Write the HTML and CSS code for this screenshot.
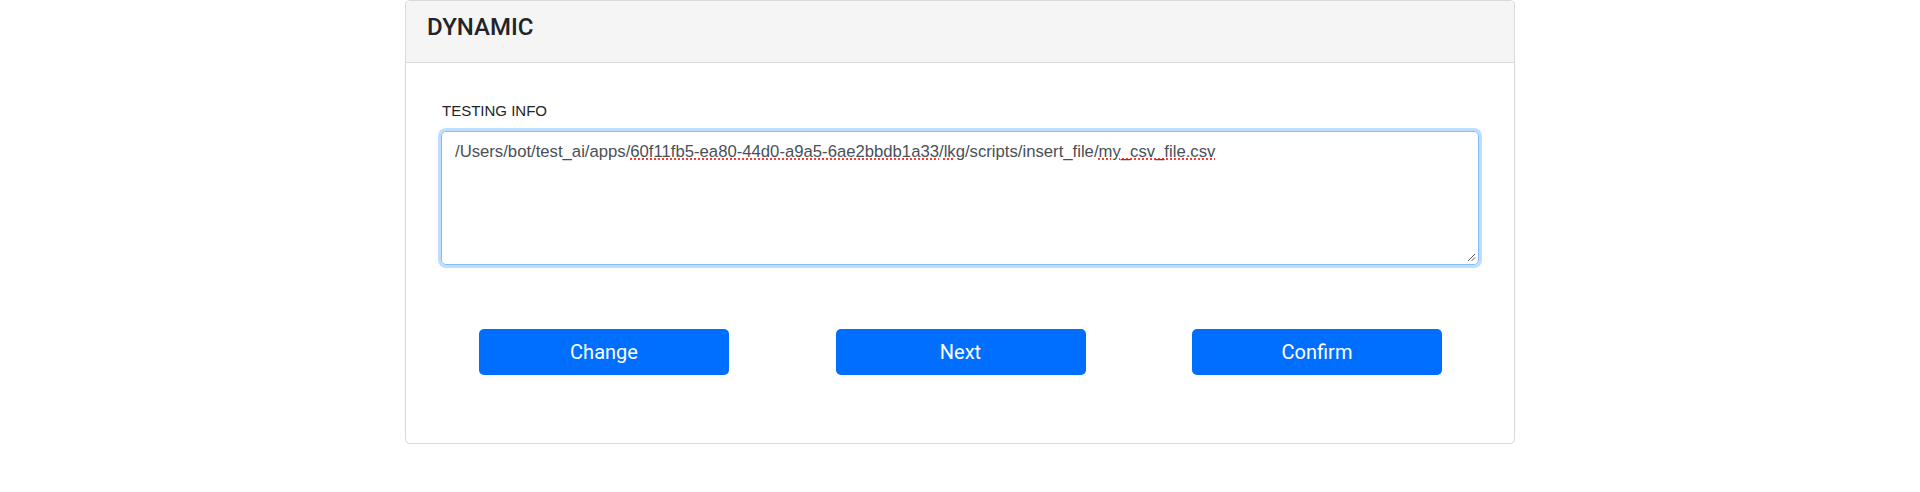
FILE: index.html
```html
<!DOCTYPE html>
<html lang="en">
<head>
<meta charset="utf-8">
<title>Dynamic</title>
<link rel="stylesheet" href="styles.css">
</head>
<body>
<div class="card">
  <div class="card-header">DYNAMIC</div>
  <div class="card-body">
    <label class="field-label">TESTING INFO</label>
    <div class="textarea">/Users/bot/test_ai/apps/<span class="spell">60f11fb5-ea80-44d0-a9a5-6ae2bbdb1a33</span>/<span class="spell">lkg</span>/scripts/insert_file/<span class="spell">my_csv_file.csv</span><svg class="grip" width="9" height="9" viewBox="0 0 9 9"><path d="M1 8 L8 1 M4.5 8 L8 4.5" stroke="#555" stroke-width="1" fill="none"/></svg></div>
    <div class="actions">
      <button class="btn">Change</button>
      <button class="btn">Next</button>
      <button class="btn">Confirm</button>
    </div>
  </div>
</div>
</body>
</html>
```
FILE: styles.css
```css
html, body {
  margin: 0;
  padding: 0;
  background: #ffffff;
}
body {
  font-family: "Liberation Sans", Arial, sans-serif;
  color: #212529;
}
.card {
  width: 1110px;
  margin: 0 auto;
  border: 1px solid #d9d9d9;
  border-radius: 5px;
  box-sizing: border-box;
  background: #fff;
}
.card-header {
  background: #f5f5f5;
  border-bottom: 1px solid #d9d9d9;
  border-radius: 5px 5px 0 0;
  padding: 11px 21px 20px;
  font-family: Roboto, "Liberation Sans", sans-serif;
  font-size: 24px;
  font-weight: 500;
  line-height: 30px;
  color: #212529;
}
.card-body {
  padding: 37px 35px 68px;
}
.field-label {
  display: block;
  font-size: 15px;
  line-height: 22px;
  margin: 0 0 9px 1px;
  color: #212529;
}
.textarea {
  position: relative;
  box-sizing: border-box;
  height: 134px;
  border: 1px solid #80bdff;
  border-radius: 5px;
  box-shadow: 0 0 0 3px rgba(0, 123, 255, 0.25);
  padding: 7px 13px;
  font-size: 16.7px;
  line-height: 25px;
  color: #495057;
  white-space: nowrap;
}
.spell {
  text-decoration: underline dotted #ff3b30;
  text-decoration-thickness: 2px;
  text-underline-offset: 1px;
}
.grip {
  position: absolute;
  right: 2px;
  bottom: 2px;
}
.actions {
  display: flex;
  justify-content: space-between;
  padding: 0 37px 0 38px;
  margin-top: 64px;
}
.btn {
  width: 250px;
  height: 46px;
  border: none;
  border-radius: 5px;
  background: #006fff;
  color: #ffffff;
  font-family: Roboto, "Liberation Sans", sans-serif;
  font-size: 20px;
  line-height: 46px;
  padding: 0;
}
```
